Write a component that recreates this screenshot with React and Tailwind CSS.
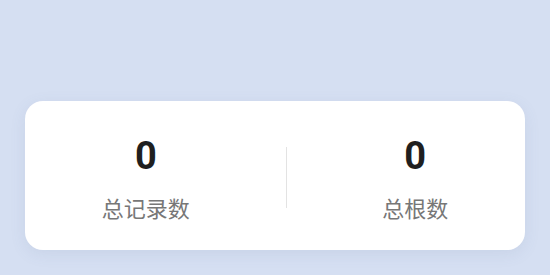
export default function App() {
    const stats = [
        { value: 0, label: '总记录数' },
        { value: 0, label: '总根数' },
    ];

    return (
        <div className="min-h-[275px] bg-[#d5dff2] px-[25px] pt-[101px] pb-[25px] font-['Roboto','Noto_Sans_CJK_SC',sans-serif]">
            <div className="flex items-center justify-around rounded-[18px] bg-white px-[29px] pt-[36px] pb-[32px] shadow-[0_4px_16px_rgba(90,110,150,0.10)]">
                <StatItem {...stats[0]} />
                <div className="h-[61px] w-px bg-[#e3e3e3]" />
                <StatItem {...stats[1]} />
            </div>
        </div>
    );
}

function StatItem({ value, label }) {
    return (
        <div className="flex flex-col items-center">
            <div className="text-[38px] font-bold leading-none text-[#1f1f1f]">{value}</div>
            <div className="mt-[21px] text-[22px] leading-none text-[#777777] font-['Noto_Sans_CJK_SC',sans-serif]">
                {label}
            </div>
        </div>
    );
}
